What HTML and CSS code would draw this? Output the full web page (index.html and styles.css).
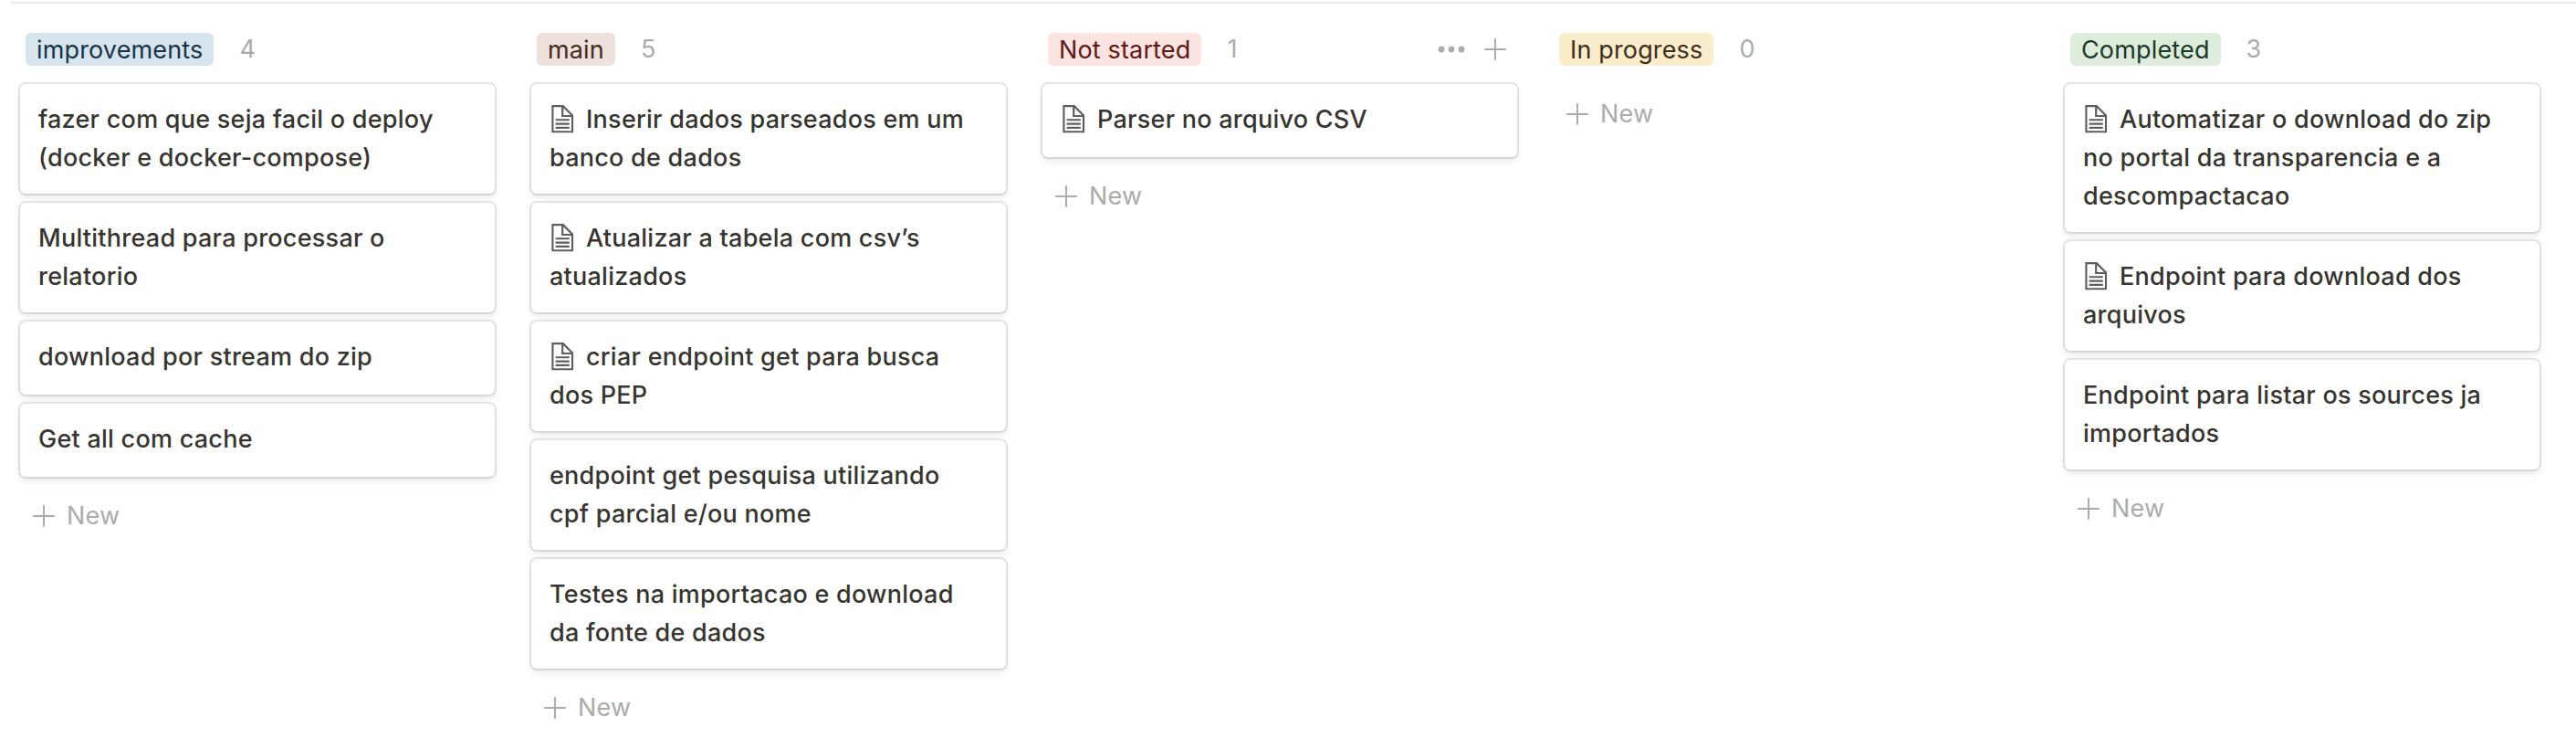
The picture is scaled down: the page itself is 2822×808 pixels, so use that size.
FILE: index.html
```html
<!DOCTYPE html>
<html lang="pt-BR">
<head>
    <meta charset="UTF-8">
    <title>Board</title>
    <link rel="stylesheet" href="styles.css">
</head>
<body>
    <!-- icons -->
    <svg class="sprite">
        <symbol id="page" viewBox="0 0 30 30">
            <path d="M16,1H4v28h22V11L16,1z M16,3.828L23.172,11H16V3.828z M24,27H6V3h8v10h10V27z M8,17h14v-2H8V17z M8,21h14v-2H8V21z M8,25h14v-2H8V25z"/>
        </symbol>
        <symbol id="plus" viewBox="0 0 24 24">
            <path d="M12 1v22M1 12h22" fill="none" stroke="currentColor" stroke-width="2" stroke-linecap="round"/>
        </symbol>
        <symbol id="dots" viewBox="0 0 30 8">
            <circle cx="4" cy="4" r="3.4"/>
            <circle cx="15" cy="4" r="3.4"/>
            <circle cx="26" cy="4" r="3.4"/>
        </symbol>
    </svg>
    <div class="board">
        <div class="column">
            <div class="head">
                <span class="tag blue">improvements</span>
                <span class="count">4</span>
            </div>
            <div class="card">fazer com que seja facil o deploy (docker e docker-compose)</div>
            <div class="card">Multithread para processar o relatorio</div>
            <div class="card">download por stream do zip</div>
            <div class="card">Get all com cache</div>
            <div class="new"><svg class="plus"><use href="#plus"/></svg>New</div>
        </div>
        <div class="column">
            <div class="head">
                <span class="tag brown">main</span>
                <span class="count">5</span>
            </div>
            <div class="card"><svg class="page"><use href="#page"/></svg>Inserir dados parseados em um banco de dados</div>
            <div class="card"><svg class="page"><use href="#page"/></svg>Atualizar a tabela com csv’s atualizados</div>
            <div class="card"><svg class="page"><use href="#page"/></svg>criar endpoint get para busca dos PEP</div>
            <div class="card">endpoint get pesquisa utilizando cpf parcial e/ou nome</div>
            <div class="card">Testes na importacao e download da fonte de dados</div>
            <div class="new"><svg class="plus"><use href="#plus"/></svg>New</div>
        </div>
        <div class="column">
            <div class="head">
                <span class="tag red">Not started</span>
                <span class="count">1</span>
                <div class="tools">
                    <svg class="dots"><use href="#dots"/></svg>
                    <svg class="plus"><use href="#plus"/></svg>
                </div>
            </div>
            <div class="card"><svg class="page"><use href="#page"/></svg>Parser no arquivo CSV</div>
            <div class="new"><svg class="plus"><use href="#plus"/></svg>New</div>
        </div>
        <div class="column">
            <div class="head">
                <span class="tag yellow">In progress</span>
                <span class="count">0</span>
            </div>
            <div class="new"><svg class="plus"><use href="#plus"/></svg>New</div>
        </div>
        <div class="column">
            <div class="head">
                <span class="tag green">Completed</span>
                <span class="count">3</span>
            </div>
            <div class="card"><svg class="page"><use href="#page"/></svg>Automatizar o download do zip no portal da transparencia e a descompactacao</div>
            <div class="card"><svg class="page"><use href="#page"/></svg>Endpoint para download dos arquivos</div>
            <div class="card">Endpoint para listar os sources ja importados</div>
            <div class="new"><svg class="plus"><use href="#plus"/></svg>New</div>
        </div>
    </div>
</body>
</html>
```
FILE: styles.css
```css
*{
    margin: 0;
    padding: 0;
    box-sizing: border-box;
}
body{
    background-color: #fff;
    color: #37352f;
    font-family: Inter, "Liberation Sans", sans-serif;
    font-size: 27px;
    line-height: 42px;
    letter-spacing: 0.15px;
    overflow: hidden;
}
.sprite{
    display: none;
}
.board{
    display: flex;
    gap: 40px;
    margin: 2px 0 0 12px;
    padding-left: 10px;
    border-top: 2px solid #e9e9e7;
}
.column{
    flex: 0 0 520px;
}
.head{
    display: flex;
    align-items: center;
    height: 88px;
    padding: 12px 12px 0 6px;
}
.tag{
    height: 36px;
    padding: 0 12px;
    border-radius: 6px;
    line-height: 37px;
    white-space: nowrap;
}
.blue{
    background-color: #d6e4ee;
    color: #183347;
}
.brown{
    background-color: #eee0da;
    color: #442a1e;
}
.red{
    background-color: #fbe4e0;
    color: #5d1715;
}
.yellow{
    background-color: #faedcc;
    color: #402c1b;
}
.green{
    background-color: #deecdc;
    color: #1c3829;
}
.count{
    margin-left: 28px;
    color: #acaba9;
}
.tools{
    display: flex;
    align-items: center;
    gap: 21px;
    margin-left: auto;
}
.card{
    min-height: 80px;
    margin-bottom: 10px;
    padding: 18px 28px 18px 20px;
    border-radius: 6px;
    background-color: #fff;
    box-shadow: 0 0 0 2px rgba(15,15,15,0.1), 0 4px 8px rgba(15,15,15,0.1);
    font-weight: 500;
    letter-spacing: 0.25px;
}
.page{
    width: 32.4px;
    height: 32.4px;
    margin: 0 9.8px 0 -2.2px;
    fill: #5f5e5b;
    vertical-align: -6px;
}
.new{
    display: flex;
    align-items: center;
    gap: 13px;
    height: 64px;
    padding: 1px 0 0 14px;
    color: #acaba9;
}
.plus{
    width: 24px;
    height: 24px;
    color: #acaba9;
}
.dots{
    width: 30px;
    height: 8px;
    fill: #acaba9;
}
```
